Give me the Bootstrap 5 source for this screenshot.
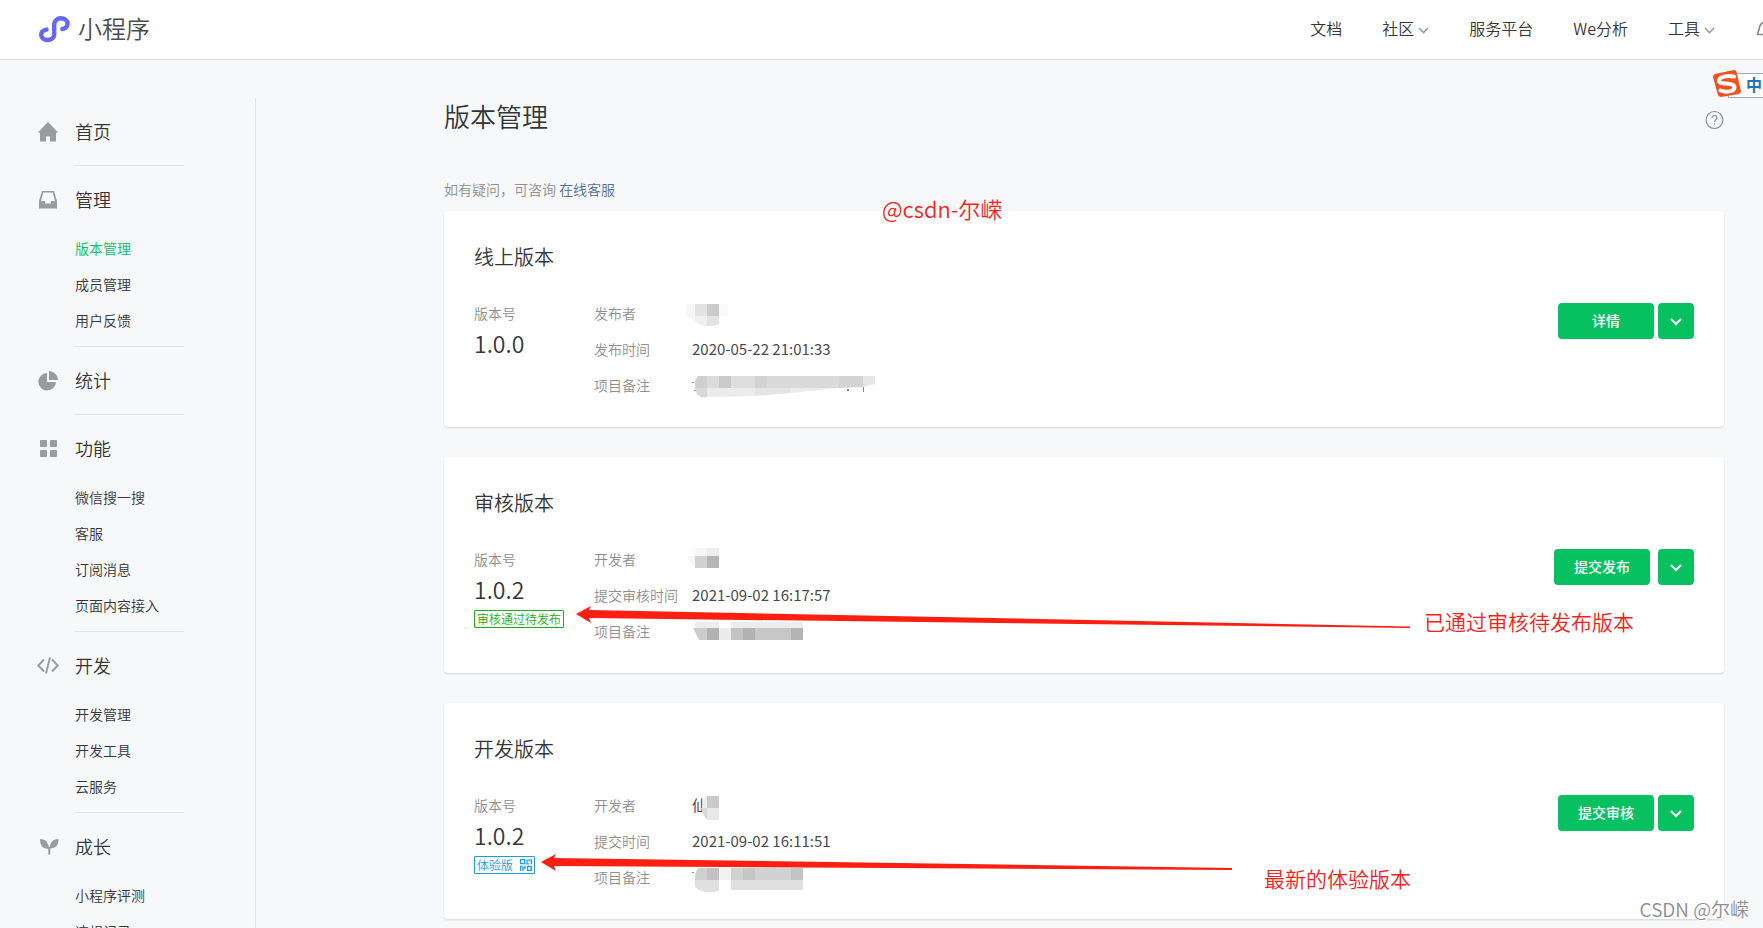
<!DOCTYPE html>
<html lang="zh-CN">
<head>
<meta charset="utf-8">
<meta name="viewport" content="width=device-width, initial-scale=1">
<title>小程序 - 版本管理</title>
<link href="https://cdn.jsdelivr.net/npm/bootstrap@5.3.0/dist/css/bootstrap.min.css" rel="stylesheet">
<style>
body{font-family:"Noto Sans CJK SC","Noto Sans",sans-serif;font-weight:350;font-size:14px;line-height:20px;color:#353537;background:#f7f8fa;height:100vh;overflow:hidden}
a{color:inherit;text-decoration:none}
.topbar{height:60px;background:#fff;border-bottom:1px solid #dcdddf;padding-left:38px}
.brand-name{font-size:24px;line-height:36px;color:#4c4c4e}
.top-links{gap:40px;font-size:16px;margin-right:-14px;padding-bottom:3px}
.side{width:256px;border-right:1px solid #e4e5e8;margin-top:38px;height:calc(100vh - 98px);overflow:hidden}
.group-title{height:36px;font-size:18px;padding:0 0 2px 37px;gap:16px;margin-top:16px}
.sub-list{margin:12px 0 -7px 75px}
.sub-list a{display:block;line-height:36px}
.side-rule{height:1px;background:#e2e3e6;margin:15px 71px 0 75px}
.on-page{color:#07c160}
.main-col{padding:36px 39px 0 188px}
.page-title{font-size:26px;line-height:40px;font-weight:350}
.help-link{margin-top:6px}
.help-row{line-height:20px;margin:43px 0 12px;color:#8f8f91}
.help-row a{color:#576b95}
.version-card{height:216px;padding:31px 30px 0;border:0;border-radius:4px;box-shadow:0 1px 2px rgba(0,0,0,.14);margin-bottom:30px}
.version-card h2{font-size:20px;line-height:30px;font-weight:350;margin:0 0 23px}
.number-col{width:120px}
.muted-text{color:#8f8f91;line-height:36px}
.number{font-size:23px;line-height:24px}
.state-tag{display:flex;width:max-content;align-items:center;gap:7px;height:18px;border:1px solid;border-radius:1px;padding:0 2px;font-size:12px;margin-top:9px}
.tag-passed{color:#1aad19}
.tag-trial{color:#1a9be6}
.info{display:grid;grid-template-columns:98px auto;line-height:36px;margin:0}
.info dt{font-weight:350;color:#8f8f91;white-space:nowrap}
.info dd{position:relative;margin:0;height:36px;font-size:15px;font-weight:400;color:#4a4a4c}
.info dd svg{position:absolute;left:-8px;top:0}
.btn-main,.btn-more{height:36px;border:0;border-radius:4px;background:#07c160;color:#fff;font-size:14px;padding:0 0 2px}
.btn-main{width:96px;font-weight:500}
.btn-more{width:36px}
.callout-red{position:absolute;color:#f5221b;font-size:21px;line-height:30px;white-space:nowrap}
.mark-author{left:438px;top:-18px;font-size:22px}
.mark-passed{left:980px;top:149px}
.mark-trial{left:820px;top:160px}
.arrow-passed{position:absolute;left:132px;top:149px}
.arrow-trial{position:absolute;left:97px;top:151px}
.ime{position:absolute;top:69px;right:0;width:51px;height:30px}
.ime-box{position:absolute;left:16px;right:0;top:4px;height:25px;border:1px solid #9fa6ad;border-right:0;background:#fff;color:#1f6fc0;font-size:16px;font-weight:700;line-height:21px;text-align:right;padding-right:1px}
.ime svg{position:absolute;left:0;top:0}
.sign{position:absolute;right:14px;bottom:5px;font-size:19px;line-height:28px;color:#8d8d8f;text-shadow:1px 1px 0 #fff}
</style>
</head>
<body>
<header class="topbar d-flex align-items-center overflow-hidden">
  <a href="#" class="d-flex align-items-center">
    <svg width="32" height="30" viewBox="0 0 32 30" fill="none" stroke="#6467ef" stroke-width="4.4" stroke-linecap="round"><path d="M8.500 14.600C5.200 15.200 3.200 17 3.200 19.800C3.200 22.700 6 25 9.400 25C13.200 25 16.200 22.700 16.200 19.500V9.300C16.200 6 19.200 3.300 22.800 3.300C26.500 3.300 29.500 5.600 29.500 8.700C29.500 11.300 27.500 13.300 24.300 14"/></svg>
    <span class="brand-name ms-2 mb-1">小程序</span>
  </a>
  <nav class="top-links d-flex align-items-center ms-auto">
    <a href="#">文档</a>
    <a href="#">社区<svg class="ms-1" width="11" height="7" viewBox="0 0 11 7" fill="none" stroke="#9a9a9a" stroke-width="1.600"><path d="M1 1l4.500 4.500L10 1"/></svg></a>
    <a href="#">服务平台</a>
    <a href="#">We分析</a>
    <a href="#">工具<svg class="ms-1" width="11" height="7" viewBox="0 0 11 7" fill="none" stroke="#9a9a9a" stroke-width="1.600"><path d="M1 1l4.500 4.500L10 1"/></svg></a>
    <a href="#" aria-label="通知"><svg width="22" height="20" viewBox="0 0 22 20" fill="none" stroke="#8a8a8a" stroke-width="1.600"><path d="M2.500 15.500L4.300 9C5 4.500 8 2.500 12 2.500S19 4.500 19.700 9l1.800 6.500z"/></svg></a>
  </nav>
</header>

<div class="d-flex">
  <aside class="side flex-shrink-0">
    <a href="#" class="group-title d-flex align-items-center"><svg width="22" height="22" viewBox="0 0 22 22" fill="#9a9b9d"><path d="M11 2L.8 12.500H3V21.500h6V16.500h4v5h6V12.500h2.200z"/></svg>首页</a>
    <div class="side-rule"></div>
    <a href="#" class="group-title d-flex align-items-center"><svg width="22" height="22" viewBox="0 0 22 22" fill="#9a9b9d" fill-rule="evenodd"><path d="M5 3h12l3 10v7.500H2V13zM6.300 4.500L4 13h4v2.500h6V13h4L15.700 4.500z"/></svg>管理</a>
    <div class="sub-list"><a href="#" class="on-page">版本管理</a><a href="#">成员管理</a><a href="#">用户反馈</a></div>
    <div class="side-rule"></div>
    <a href="#" class="group-title d-flex align-items-center"><svg width="22" height="22" viewBox="0 0 22 22" fill="#9a9b9d"><path d="M10 4A8.800 8.800 0 1 0 19 13H10z"/><path d="M12 2a9 9 0 0 1 9 9h-9z"/></svg>统计</a>
    <div class="side-rule"></div>
    <a href="#" class="group-title d-flex align-items-center"><svg width="22" height="22" viewBox="0 0 22 22" fill="#9a9b9d"><rect x="3" y="3" width="7" height="7" rx="1"/><rect x="13" y="3" width="7" height="7" rx="1"/><rect x="3" y="13" width="7" height="7" rx="1"/><rect x="13" y="13" width="7" height="7" rx="1"/></svg>功能</a>
    <div class="sub-list"><a href="#">微信搜一搜</a><a href="#">客服</a><a href="#">订阅消息</a><a href="#">页面内容接入</a></div>
    <div class="side-rule"></div>
    <a href="#" class="group-title d-flex align-items-center"><svg width="22" height="22" viewBox="0 0 22 22" fill="none" stroke="#9a9b9d" stroke-width="1.900"><path d="M7 5.500L1.300 11.500 7 17.500M15 5.500l5.700 6-5.700 6M13 3.500L9 19.500"/></svg>开发</a>
    <div class="sub-list"><a href="#">开发管理</a><a href="#">开发工具</a><a href="#">云服务</a></div>
    <div class="side-rule"></div>
    <a href="#" class="group-title d-flex align-items-center"><svg width="22" height="22" viewBox="0 0 22 22" fill="#9a9b9d"><path d="M3 4C8 4 11.500 7 12 13.500 6.500 14.500 3 11 3 4zM21.500 4c0 6-2.500 9.500-8.500 9.500C12.500 8 16 4 21.500 4z"/><path d="M11.300 12h2v7.500h-2z"/></svg>成长</a>
    <div class="sub-list"><a href="#">小程序评测</a><a href="#">违规记录</a></div>
  </aside>

  <main class="main-col flex-grow-1">
    <div class="d-flex justify-content-between align-items-center">
      <h1 class="page-title mb-0">版本管理</h1>
      <a href="#" aria-label="帮助" class="help-link"><svg width="20" height="20" viewBox="0 0 20 20" fill="none" stroke="#8f8f92" stroke-width="1.200"><circle cx="10.500" cy="10" r="8.500"/><path d="M8 8c0-1.500 1-2.500 2.500-2.500s2.500 1 2.500 2.300c0 1.700-2.500 2-2.500 4.200M10.500 13.300v1.300"/></svg></a>
    </div>
    <p class="help-row">如有疑问，可咨询 <a href="#">在线客服</a></p>

    <section class="card version-card">
      <h2>线上版本</h2>
      <div class="d-flex">
        <div class="number-col"><div class="muted-text">版本号</div><div class="number">1.0.0</div></div>
        <dl class="info">
          <dt>发布者</dt><dd><svg width="48" height="36"><path fill="#f5f5f5" d="M3 9h8v16C5 24 2 20 2 16z"/><path fill="#e2e2e2" d="M11 9h12v12H11z"/><path fill="#cbcbcb" d="M23 9h12v12H23z"/><path fill="#f0f0f0" d="M11 21h12v10c-5 0-9-2-12-5z"/><path fill="#e3e3e3" d="M23 21h12v8c-4 2-8 2-12 2z"/><path fill="#fafafa" d="M35 9h9v12h-9z"/></svg></dd>
          <dt>发布时间</dt><dd>2020-05-22 21:01:33</dd>
          <dt>项目备注</dt><dd><svg width="200" height="36"><path fill="#8a8a8a" d="M8 15h2v1H8zM10 23h2v1h-2zM163 22h2v2h-2zM179 20h1v5h-1z"/><path fill="#cfcfcf" d="M14 9h9v12H11v-7z"/><path fill="#dcdcdc" d="M23 9h12v12H23z"/><path fill="#cacaca" d="M35 9h12v12H35z"/><path fill="#dedede" d="M47 9h24v12H47z"/><path fill="#d2d2d2" d="M71 9h12v12H71z"/><path fill="#dadada" d="M83 9h72v12H83z"/><path fill="#d3d3d3" d="M155 9h24v11l-24 1z"/><path fill="#e6e6e6" d="M179 9h12v8l-12 3z"/><path fill="#d8d8d8" d="M11 21h12v9c-6 2-11-2-12-9z"/><path fill="#ebebeb" d="M23 21h48v8l-48 1z"/><path fill="#e4e4e4" d="M71 21h36v5l-36 3z"/><path fill="#ececec" d="M107 21h48l-48 5z"/></svg></dd>
        </dl>
        <div class="d-flex gap-1 ms-auto align-self-start mt-2"><button class="btn-main" type="button">详情</button><button class="btn-more" type="button" aria-label="更多"><svg width="12" height="8" viewBox="0 0 12 8" fill="none" stroke="#fff" stroke-width="2"><path d="M1 1l5 5 5-5"/></svg></button></div>
      </div>
      <span class="callout-red mark-author">@csdn-尔嵘</span>
    </section>

    <section class="card version-card">
      <h2>审核版本</h2>
      <div class="d-flex">
        <div class="number-col"><div class="muted-text">版本号</div><div class="number">1.0.2</div><span class="state-tag tag-passed">审核通过待发布</span></div>
        <dl class="info">
          <dt>开发者</dt><dd><svg width="48" height="36"><path fill="#f6f6f6" d="M11 7h12v8H11zM4 15h7v10c-5-1-7-5-7-10z"/><path fill="#ededed" d="M23 7h12v8H23z"/><path fill="#d2d2d2" d="M11 15h12v12H11z"/><path fill="#b6b6b6" d="M23 15h12v12H23z"/></svg></dd>
          <dt>提交审核时间</dt><dd>2021-09-02 16:17:57</dd>
          <dt>项目备注</dt><dd><svg width="130" height="36"><path fill="#ececec" d="M11 9h24v6H11zM47 9h72v6H47zM35 15h12v12H35z"/><path fill="#cbcbcb" d="M9 15h14v12h-8z"/><path fill="#b2b2b2" d="M23 15h12v12H23z"/><path fill="#c3c3c3" d="M47 15h12v12H47z"/><path fill="#b3b3b3" d="M59 15h12v12H59z"/><path fill="#c7c7c7" d="M71 15h36v12H71z"/><path fill="#b4b4b4" d="M107 15h12v12h-12z"/></svg></dd>
        </dl>
        <div class="d-flex gap-2 ms-auto align-self-start mt-2"><button class="btn-main" type="button">提交发布</button><button class="btn-more" type="button" aria-label="更多"><svg width="12" height="8" viewBox="0 0 12 8" fill="none" stroke="#fff" stroke-width="2"><path d="M1 1l5 5 5-5"/></svg></button></div>
      </div>
      <svg class="arrow-passed" width="836" height="24" fill="#fb1f12"><path d="M0 8L15 0 13 4 834 20.500V22L13 12l2 5z"/></svg>
      <span class="callout-red mark-passed">已通过审核待发布版本</span>
    </section>

    <section class="card version-card">
      <h2>开发版本</h2>
      <div class="d-flex">
        <div class="number-col"><div class="muted-text">版本号</div><div class="number">1.0.2</div><a href="#" class="state-tag tag-trial">体验版<svg width="12" height="12" viewBox="0 0 12 12" fill="none" stroke="currentColor" stroke-width="1.300"><path d="M.7.700h4v4h-4zM7.500 7.500h3.800v3.800H7.500zM7 .500v4.300h2M11.300 0v5M9.200 0v2.500M.7 12V7.300h2M5 6.500V9H3v3"/></svg></a></div>
        <dl class="info">
          <dt>开发者</dt><dd>仙<svg width="48" height="36"><path fill="#ececec" d="M23 9v12h-5c1-6 2-10 5-12z"/><path fill="#cacaca" d="M23 9h12v12H23z"/><path fill="#dadada" d="M17 21h6v11c-3-2-5-6-6-11z"/><path fill="#e8e8e8" d="M23 21h12v12H23z"/></svg></dd>
          <dt>提交时间</dt><dd>2021-09-02 16:11:51</dd>
          <dt>项目备注</dt><dd><svg width="130" height="36"><path fill="#8a8a8a" d="M8 13h2v1H8z"/><path fill="#cfcfcf" d="M15 9h8v12H11c0-6 1-10 4-12z"/><path fill="#c2c2c2" d="M23 9h12v12H23z"/><path fill="#f2f2f2" d="M35 9h12v12H35z"/><path fill="#d0d0d0" d="M47 9h12v12H47z"/><path fill="#c6c6c6" d="M59 9h12v12H59z"/><path fill="#d2d2d2" d="M71 9h36v12H71z"/><path fill="#c4c4c4" d="M107 9h12v12h-12z"/><path fill="#e0e0e0" d="M11 21h24v11c-9 2-18 2-24-4zM47 21h72v10H47z"/></svg></dd>
        </dl>
        <div class="d-flex gap-1 ms-auto align-self-start mt-2"><button class="btn-main" type="button">提交审核</button><button class="btn-more" type="button" aria-label="更多"><svg width="12" height="8" viewBox="0 0 12 8" fill="none" stroke="#fff" stroke-width="2"><path d="M1 1l5 5 5-5"/></svg></button></div>
      </div>
      <svg class="arrow-trial" width="692" height="20" fill="#fb1f12"><path d="M0 8L15 0 13 4 691 14V16L13 12l2 5z"/></svg>
      <span class="callout-red mark-trial">最新的体验版本</span>
    </section>
  </main>
</div>

<div class="ime">
  <div class="ime-box">中</div>
  <svg width="30" height="30" viewBox="0 0 30 30"><path fill="#f0521f" d="M3 5L22 1q2 0 2.500 2L29 22q0 2-2 3L9 28q-2 0-3-2L1 8q0-2 2-3z"/><path fill="none" stroke="#fff" stroke-width="4" stroke-linecap="round" d="M22 7.500C15 6 7 8 7 12s15 1 15.500 6-9 5.500-14 3.500"/></svg>
</div>
<div class="sign">CSDN @尔嵘</div>
</body>
</html>
